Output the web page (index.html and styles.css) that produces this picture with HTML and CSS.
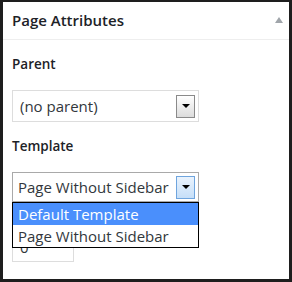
FILE: index.html
```html
<!DOCTYPE html>
<html lang="en">
<head>
    <meta charset="UTF-8">
    <meta name="viewport" content="width=device-width, initial-scale=1.0">
    <title>Page Attributes</title>
    <link rel="stylesheet" href="styles.css">
</head>
<body>
    <div class="panel">
        <header class="panel-head">
            <h2>Page Attributes</h2>
            <span class="toggle"></span>
        </header>
        <div class="panel-body">
            <p class="label">Parent</p>
            <div class="select">
                <span class="select-text">(no parent)</span>
                <span class="arrow-btn"><span class="arrow"></span></span>
            </div>

            <p class="label">Template</p>
            <div class="select-wrap">
                <div class="select select-open">
                    <span class="select-text">Page Without Sidebar</span>
                    <span class="arrow-btn arrow-btn-hover"><span class="arrow"></span></span>
                </div>
                <ul class="dropdown">
                    <li class="option selected">Default Template</li>
                    <li class="option">Page Without Sidebar</li>
                </ul>
            </div>

            <div class="order-input"><span class="order-value">0</span></div>
        </div>
    </div>
</body>
</html>
```

FILE: styles.css
```css
* {
    margin: 0;
    padding: 0;
    box-sizing: border-box;
}

body {
    font-family: 'Open Sans', sans-serif;
    background-color: #ffffff;
    color: #23282d;
}

.panel {
    width: 292px;
    height: 282px;
    border: 3px solid #1e1e1e;
    border-top-width: 2px;
    background-color: #ffffff;
    overflow: hidden;
}

.panel-head {
    display: flex;
    align-items: center;
    justify-content: space-between;
    height: 38px;
    padding: 0 6px 0 9px;
    border-bottom: 1px solid #eeeeee;
}

.panel-head h2 {
    font-size: 15px;
    font-weight: 600;
    line-height: 1;
    color: #1d2227;
}

.toggle {
    width: 0;
    height: 0;
    border-left: 4px solid transparent;
    border-right: 4px solid transparent;
    border-bottom: 6px solid #a0a5aa;
    margin-top: -2px;
}

.panel-body {
    padding: 0 9px;
}

.label {
    font-size: 13.5px;
    font-weight: 600;
    line-height: 19px;
    margin-top: 15px;
    margin-bottom: 16px;
    color: #1d2227;
}

.select {
    display: flex;
    align-items: center;
    width: 187px;
    height: 32px;
    border: 1px solid #dddddd;
    padding: 0 3px 0 7px;
    font-size: 15px;
    color: #32373c;
    white-space: nowrap;
}

.select-open {
    border-color: #a9a9a9;
    height: 30px;
    margin-top: 2px;
    padding-left: 5px;
}

.select-text {
    flex: 1;
    line-height: 20px;
}

.arrow-btn {
    display: flex;
    align-items: center;
    justify-content: center;
    width: 19px;
    height: 23px;
    border: 1px solid #8a8a8a;
    background: linear-gradient(#ffffff, #dcdcdc);
}

.arrow-btn-hover {
    border-color: #6fa5de;
    background: linear-gradient(#eaf3fd, #c6dff8);
}

.arrow {
    width: 0;
    height: 0;
    border-left: 4px solid transparent;
    border-right: 4px solid transparent;
    border-top: 4px solid #000000;
}

.select-wrap {
    position: relative;
}

.dropdown {
    position: absolute;
    top: 100%;
    left: 0;
    width: 187px;
    list-style: none;
    background-color: #ffffff;
    border: 1px solid #000000;
    z-index: 2;
}

.option {
    height: 22px;
    line-height: 22px;
    padding-left: 5px;
    font-size: 15px;
    color: #32373c;
    white-space: nowrap;
}

.option.selected {
    background-color: #4a8ffc;
    color: #ffffff;
}

.order-input {
    width: 62px;
    height: 30px;
    margin-top: 30px;
    border: 1px solid #dddddd;
    padding: 0 7px;
    font-size: 15px;
    line-height: 15px;
    color: #32373c;
    overflow: hidden;
}

.order-value {
    display: block;
    padding-top: 7px;
}
```
